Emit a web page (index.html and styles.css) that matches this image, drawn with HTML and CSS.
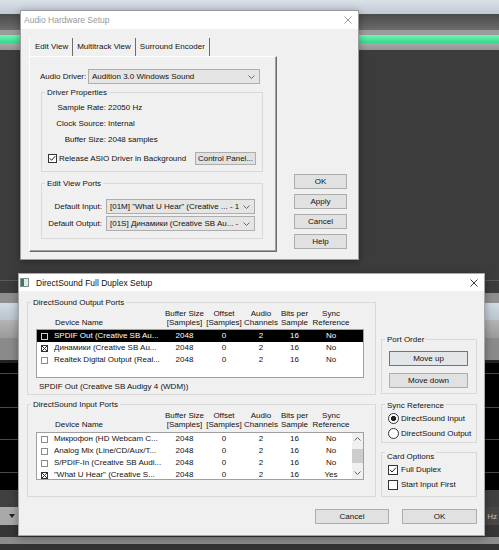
FILE: index.html
```html
<!DOCTYPE html>
<html lang="en">
<head>
	<meta charset="UTF-8">
	<title>Audio Hardware Setup</title>
	<link rel="stylesheet" href="styles.css">
</head>
<body>
	<!-- application behind the dialogs -->
	<div class="desk">
		<div class="sky"></div>
		<div class="top-dark"></div>
		<div class="top-grey"></div>
		<div class="top-green"></div>
		<div class="top-grey2"></div>
		<div class="work"><div class="work-line"></div></div>
		<div class="row-a"></div>
		<div class="row-sel"></div>
		<div class="row-b"></div>
		<div class="row-c"></div>
		<div class="row-sep"></div>
		<div class="tracks"></div>
		<div class="foot-a"></div>
		<div class="foot-b">
			<div class="mini-combo">
				<svg width="6" height="4" viewBox="0 0 6 4"><polygon points="0,0 6,0 3,4" fill="#222"/></svg>
			</div>
			<span class="hz">Hz</span>
		</div>
		<div class="foot-c"></div>
		<div class="foot-d"></div>
		<div class="foot-e"></div>
	</div>

	<!-- Audio Hardware Setup (inactive) -->
	<div class="win win-hw">
		<div class="titlebar">
			<span class="title inactive">Audio Hardware Setup</span>
			<svg class="close" width="8" height="8" viewBox="0 0 8 8"><path d="M0.5 0.5L7.5 7.5M7.5 0.5L0.5 7.5" stroke="#8c8c8c" stroke-width="0.9"/></svg>
		</div>
		<div class="hw-body">
			<div class="tabctl">
				<div class="tabs">
					<div class="tab sel">Edit View</div>
					<div class="tab">Multitrack View</div>
					<div class="tab">Surround Encoder</div>
				</div>
				<div class="tabpage">
					<div class="driver-row">
						<span class="lbl">Audio Driver:</span>
						<div class="combo driver-combo">
							<span>Audition 3.0 Windows Sound</span>
							<svg class="chev" width="7" height="4" viewBox="0 0 7 4"><polyline points="0.5,0.5 3.5,3.5 6.5,0.5" fill="none" stroke="#666"/></svg>
						</div>
					</div>

					<div class="grp props">
						<span class="gl">Driver Properties</span>
						<div class="props-grid">
							<span>Sample Rate:</span><span>22050 Hz</span>
							<span>Clock Source:</span><span>Internal</span>
							<span>Buffer Size:</span><span>2048 samples</span>
						</div>
						<div class="asio-row">
							<svg class="cb9" width="9" height="9" viewBox="0 0 9 9"><rect x="0.5" y="0.5" width="8" height="8" fill="#fff" stroke="#333"/><polyline points="1.8,4.3 3.6,6.3 7.2,2.2" fill="none" stroke="#222"/></svg>
							<span>Release ASIO Driver in Background</span>
							<button class="btn cp-btn">Control Panel...</button>
						</div>
					</div>

					<div class="grp ports">
						<span class="gl">Edit View Ports</span>
						<div class="ports-grid">
							<span>Default Input:</span>
							<div class="combo">
								<span>[01M] "What U Hear" (Creative ... - 1</span>
								<svg class="chev" width="7" height="4" viewBox="0 0 7 4"><polyline points="0.5,0.5 3.5,3.5 6.5,0.5" fill="none" stroke="#666"/></svg>
							</div>
							<span>Default Output:</span>
							<div class="combo">
								<span>[01S] Динамики (Creative SB Au... - 1</span>
								<svg class="chev" width="7" height="4" viewBox="0 0 7 4"><polyline points="0.5,0.5 3.5,3.5 6.5,0.5" fill="none" stroke="#666"/></svg>
							</div>
						</div>
					</div>
				</div>
			</div>
			<div class="side-btns">
				<button class="btn">OK</button>
				<button class="btn">Apply</button>
				<button class="btn">Cancel</button>
				<button class="btn">Help</button>
			</div>
		</div>
	</div>

	<!-- DirectSound Full Duplex Setup (active) -->
	<div class="win win-ds">
		<div class="titlebar">
			<svg class="app-icon" width="9" height="9" viewBox="0 0 9 9"><rect x="0.5" y="0.5" width="8" height="8" fill="#e3e8e5" stroke="#7d9089"/><rect x="1" y="1" width="3" height="7" fill="#3d7a63"/></svg>
			<span class="title">DirectSound Full Duplex Setup</span>
			<svg class="close" width="8" height="8" viewBox="0 0 8 8"><path d="M0.5 0.5L7.5 7.5M7.5 0.5L0.5 7.5" stroke="#222" stroke-width="0.9"/></svg>
		</div>
		<div class="ds-body">
			<div class="ds-main">
				<div class="ds-left">
					<div class="grp out-grp">
						<span class="gl">DirectSound Output Ports</span>
						<div class="cols colhead">
							<span></span><span class="name">Device Name</span>
							<span>Buffer Size<br>[Samples]</span>
							<span>Offset<br>[Samples]</span>
							<span>Audio<br>Channels</span>
							<span>Bits per<br>Sample</span>
							<span>Sync<br>Reference</span>
						</div>
						<div class="list out-list">
							<div class="rows">
								<div class="cols item sel">
									<span><i class="lcb"></i></span><span class="name">SPDIF Out (Creative SB Au...</span>
									<span>2048</span><span>0</span><span>2</span><span>16</span><span>No</span>
								</div>
								<div class="cols item">
									<span><i class="lcb on"></i></span><span class="name">Динамики (Creative SB Au...</span>
									<span>2048</span><span>0</span><span>2</span><span>16</span><span>No</span>
								</div>
								<div class="cols item">
									<span><i class="lcb"></i></span><span class="name">Realtek Digital Output (Real...</span>
									<span>2048</span><span>0</span><span>2</span><span>16</span><span>No</span>
								</div>
							</div>
						</div>
						<div class="cur-dev">SPDIF Out (Creative SB Audigy 4 (WDM))</div>
					</div>

					<div class="grp in-grp">
						<span class="gl">DirectSound Input Ports</span>
						<div class="cols colhead">
							<span></span><span class="name">Device Name</span>
							<span>Buffer Size<br>[Samples]</span>
							<span>Offset<br>[Samples]</span>
							<span>Audio<br>Channels</span>
							<span>Bits per<br>Sample</span>
							<span>Sync<br>Reference</span>
						</div>
						<div class="list in-list">
							<div class="rows">
								<div class="cols item">
									<span><i class="lcb"></i></span><span class="name">Микрофон (HD Webcam C...</span>
									<span>2048</span><span>0</span><span>2</span><span>16</span><span>No</span>
								</div>
								<div class="cols item">
									<span><i class="lcb"></i></span><span class="name">Analog Mix (Line/CD/Aux/T...</span>
									<span>2048</span><span>0</span><span>2</span><span>16</span><span>No</span>
								</div>
								<div class="cols item">
									<span><i class="lcb"></i></span><span class="name">S/PDIF-In (Creative SB Audi...</span>
									<span>2048</span><span>0</span><span>2</span><span>16</span><span>No</span>
								</div>
								<div class="cols item">
									<span><i class="lcb on"></i></span><span class="name">"What U Hear" (Creative S...</span>
									<span>2048</span><span>0</span><span>2</span><span>16</span><span>Yes</span>
								</div>
							</div>
							<div class="vscroll">
								<svg width="7" height="4" viewBox="0 0 7 4"><polyline points="0.5,3.5 3.5,0.5 6.5,3.5" fill="none" stroke="#606060"/></svg>
								<div class="thumb"></div>
								<svg width="7" height="4" viewBox="0 0 7 4"><polyline points="0.5,0.5 3.5,3.5 6.5,0.5" fill="none" stroke="#606060"/></svg>
							</div>
						</div>
					</div>
				</div>

				<div class="ds-right">
					<div class="grp order-grp">
						<span class="gl">Port Order</span>
						<button class="btn wide focus">Move up</button>
						<button class="btn wide">Move down</button>
					</div>

					<div class="grp sync-grp">
						<span class="gl">Sync Reference</span>
						<div class="opt"><i class="radio on"></i>DirectSound Input</div>
						<div class="opt"><i class="radio"></i>DirectSound Output</div>
					</div>

					<div class="grp card-grp">
						<span class="gl">Card Options</span>
						<div class="opt">
							<svg class="cb10" width="10" height="10" viewBox="0 0 10 10"><rect x="0.5" y="0.5" width="9" height="9" fill="#fff" stroke="#333"/><polyline points="2,4.8 4,7 8,2.6" fill="none" stroke="#222"/></svg>
							Full Duplex
						</div>
						<div class="opt">
							<svg class="cb10" width="10" height="10" viewBox="0 0 10 10"><rect x="0.5" y="0.5" width="9" height="9" fill="#fff" stroke="#333"/></svg>
							Start Input First
						</div>
					</div>
				</div>
			</div>
			<div class="ds-foot">
				<button class="btn cancel-btn">Cancel</button>
				<button class="btn ok-btn">OK</button>
			</div>
		</div>
	</div>
</body>
</html>
```

FILE: styles.css
```css
html, body {
	margin: 0;
	padding: 0;
}

body {
	width: 499px;
	height: 550px;
	overflow: hidden;
	position: relative;
	background: #3c3c3c;
	font-family: "Liberation Sans", Arial, sans-serif;
	font-size: 8px;
	color: #111;
}

/* ---------- app in the background ---------- */
.sky { height: 14px; background: linear-gradient(#d9e0e8, #c1cad4); }
.top-dark { height: 16px; background: linear-gradient(#4a4a4a, #6c6c6c); }
.top-grey { height: 5px; background: #9b9b9b; }
.top-green { height: 8px; background: linear-gradient(#74f3b8, #30da8c); }
.top-grey2 { height: 7px; background: linear-gradient(#a9a9a9, #949494); }
.work { height: 243px; box-sizing: border-box; padding-top: 230px; background: #3c3c3c; }
.work-line { height: 1px; background: #5a5a5a; }
.row-a { height: 10px; background: #8e8e8e; }
.row-sel { height: 17px; background: linear-gradient(#d0dbe4, #b8c4ce); }
.row-b { height: 18px; background: linear-gradient(#b4b4b4, #9a9a9a); }
.row-c { height: 22px; background: #8a8a8a; }
.row-sep { height: 3px; background: #222; }
.tracks {
	height: 127px;
	background: linear-gradient(#000 10px, #4a4a4a 10px, #4a4a4a 11px, #000 11px,
		#000 44px, #4a4a4a 44px, #4a4a4a 45px, #000 45px,
		#000 76px, #4a4a4a 76px, #4a4a4a 77px, #000 77px,
		#000 109px, #4a4a4a 109px, #4a4a4a 110px, #000 110px);
}
.foot-a { height: 17px; background: #404040; }
.foot-b {
	height: 18px;
	background: #474747;
	display: flex;
	align-items: center;
	justify-content: space-between;
}
.mini-combo {
	width: 18px;
	height: 18px;
	background: #a9a9a9;
	display: flex;
	align-items: center;
	justify-content: flex-end;
	padding-right: 3px;
	box-sizing: border-box;
}
.hz { color: #c4c4c4; padding-right: 2px; }
.foot-c { height: 12px; background: #363636; }
.foot-d { height: 7px; background: #8c8c8c; }
.foot-e { height: 6px; background: #333; }

/* ---------- windows ---------- */
.win {
	position: absolute;
	background: #f0f0f0;
	border: 1px solid #9b9b9b;
	box-shadow: 0 2px 8px rgba(0, 0, 0, 0.35);
}
.win-hw { left: 20px; top: 10px; width: 337px; height: 248px; }
.win-ds { left: 18px; top: 273px; width: 465px; height: 261px; border-color: #a8a8a8; }

.titlebar {
	display: flex;
	align-items: center;
	background: #fff;
	height: 18px;
}
.win-ds .titlebar { height: 17px; }
.title { font-size: 8.5px; padding-left: 3px; }
.title.inactive { color: #999; }
.close { margin-left: auto; margin-right: 6px; }
.app-icon { margin-left: 1px; }
.win-ds .title { padding-left: 7px; }

.btn {
	font: inherit;
	color: #111;
	background: #e1e1e1;
	border: 1px solid #adadad;
	padding: 0;
	height: 15px;
	line-height: 13px;
	text-align: center;
	box-sizing: border-box;
}

/* group box: the caption sits on the top line */
.grp {
	border: 1px solid #d9d9d9;
	box-sizing: border-box;
}
.gl {
	display: block;
	width: max-content;
	height: 10px;
	line-height: 10px;
	margin: -5px 0 0 3px;
	padding: 0 2px;
	background: #f0f0f0;
	white-space: nowrap;
}

.combo {
	display: flex;
	align-items: center;
	height: 15px;
	box-sizing: border-box;
	background: #e5e5e5;
	border: 1px solid #adadad;
	padding: 0 4px 0 3px;
}
.combo span { flex: 1; overflow: hidden; white-space: nowrap; }
.chev { flex: none; margin-left: 2px; }

/* ---------- Audio Hardware Setup ---------- */
.hw-body {
	display: flex;
	padding: 9px 0 0 8px;
}
.tabctl { width: 248px; }
.tabs { display: flex; height: 18px; }
.tab {
	padding: 0 4px;
	line-height: 18px;
	border-right: 1px solid #6d6d6d;
	white-space: nowrap;
}
.tab.sel { border-left: 1px solid #fff; padding-left: 5px; }
.tabpage {
	height: 196px;
	box-sizing: border-box;
	border: 1px solid;
	border-color: #fff #6d6d6d #6d6d6d #fff;
	box-shadow: inset -1px -1px #a0a0a0;
	padding: 12px 14px 0 10px;
}
.driver-row { display: flex; align-items: center; }
.driver-row .lbl { width: 48px; }
.driver-combo { width: 172px; }

.props { margin: 8px 0 0 1px; width: 222px; padding-bottom: 5px; }
.props-grid {
	display: grid;
	grid-template-columns: 64px auto;
	column-gap: 2px;
	line-height: 16px;
	margin-top: 2px;
}
.props-grid span:nth-child(odd) { text-align: right; }
.asio-row {
	display: flex;
	align-items: center;
	height: 15px;
	margin-top: 3px;
	padding-left: 6px;
}
.cb9 { margin-right: 2px; }
.cp-btn { margin-left: auto; margin-right: 6px; width: 61px; height: 13px; line-height: 11px; }

.ports { margin: 11px 0 0 1px; width: 222px; padding-bottom: 7px; }
.ports-grid {
	display: grid;
	grid-template-columns: 60px 149px;
	column-gap: 4px;
	row-gap: 2px;
	align-items: center;
	margin-top: 10px;
}
.ports-grid > span { text-align: right; white-space: nowrap; }

.side-btns {
	display: flex;
	flex-direction: column;
	gap: 5px;
	margin: 136px 0 0 17px;
}
.side-btns .btn { width: 53px; }

/* ---------- DirectSound Full Duplex Setup ---------- */
.ds-body { padding: 0 7px 0 8px; }
.ds-main { display: flex; gap: 5px; }
.ds-left { width: 349px; margin-top: 11px; }
.ds-right { flex: 1; margin-top: 48px; }

.cols {
	display: grid;
	grid-template-columns: 17px 111px 39px 40px 34px 33px 40px;
	text-align: center;
	white-space: nowrap;
}
.cols .name { text-align: left; overflow: hidden; }
.colhead { margin: 1px 0 0 9px; line-height: 9px; align-items: end; }
.colhead .name { padding-left: 1px; }

.list {
	display: flex;
	margin: 2px 11px 0 8px;
	box-sizing: border-box;
	border: 1px solid #a0a0a0;
	background: #fff;
}
.out-list { height: 49px; }
.in-list { height: 48px; margin-top: 3px; }
.rows { flex: 1; }
.item { height: 12px; line-height: 12px; }
.item.sel { background: #000; color: #fff; }
.item > span:first-child { display: flex; align-items: center; padding-left: 4px; }

.lcb {
	display: block;
	width: 7px;
	height: 7px;
	box-sizing: border-box;
	border: 1px solid #8a8a8a;
	background: #fff;
}
.item.sel .lcb { background: #000; border-color: #cfcfcf; }
.lcb.on {
	border-color: #333;
	background:
		linear-gradient(45deg, transparent 44%, #333 44%, #333 56%, transparent 56%),
		linear-gradient(-45deg, transparent 44%, #333 44%, #333 56%, transparent 56%),
		#fff;
}

.cur-dev { margin: 4px 0 0 11px; line-height: 10px; }
.out-grp { padding-bottom: 2px; }
.in-grp { margin-top: 9px; padding-bottom: 16px; }

.vscroll {
	width: 11px;
	background: #f0f0f0;
	display: flex;
	flex-direction: column;
	align-items: center;
	padding: 4px 0;
	box-sizing: border-box;
}
.vscroll .thumb {
	width: 11px;
	height: 14px;
	background: #cdcdcd;
	margin: 8px 0 auto;
}

.order-grp { padding-bottom: 5px; }
.btn.wide { display: block; width: 79px; margin: 7px 0 0 7px; }
.btn.wide.focus { margin-top: 6px; border-color: #2b86d9; background: #e3e6e9; }

.sync-grp { margin-top: 10px; padding: 1px 0 1px; }
.card-grp { margin-top: 9px; padding: 4px 0 4px; }
.opt {
	display: flex;
	align-items: center;
	height: 15px;
	padding-left: 6px;
	white-space: nowrap;
}
.radio {
	display: block;
	width: 11px;
	height: 11px;
	box-sizing: border-box;
	border: 1px solid #333;
	border-radius: 50%;
	background: #fff;
	margin-right: 2px;
}
.radio.on { background: radial-gradient(circle, #222 2.4px, #fff 2.9px); }
.cb10 { margin-right: 3px; }

.ds-foot {
	display: flex;
	justify-content: flex-end;
	gap: 13px;
	margin-top: 12px;
}
.cancel-btn { width: 74px; }
.ok-btn { width: 75px; }
```
